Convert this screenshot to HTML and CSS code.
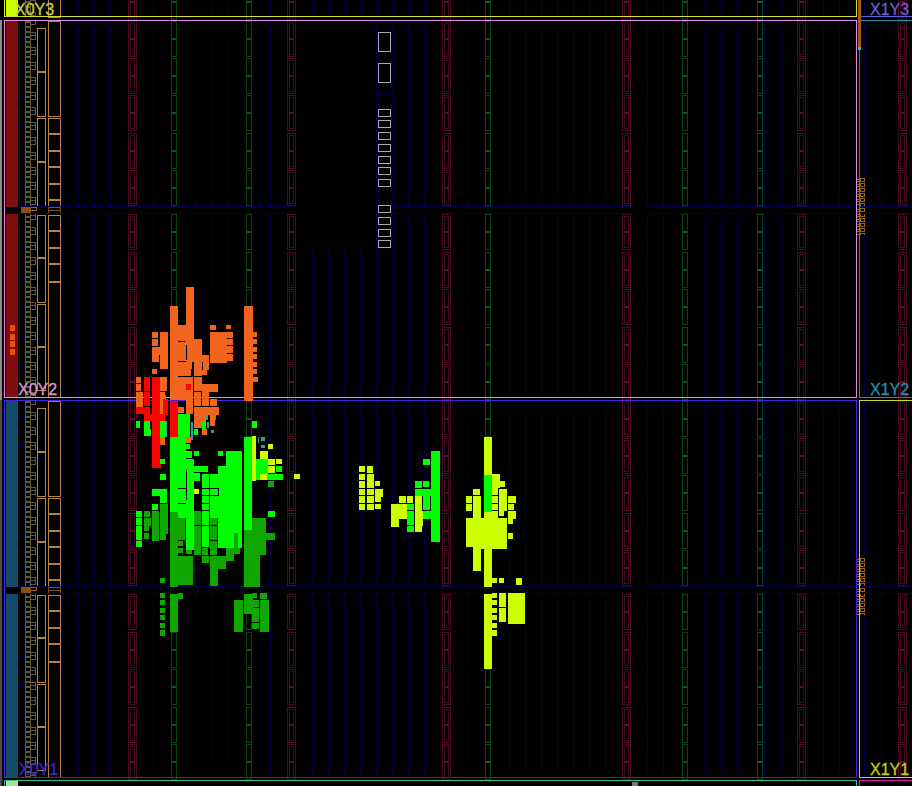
FILE: index.html
```html
<!DOCTYPE html>
<html lang="en">
<head>
<meta charset="utf-8">
<title>Device view</title>
<link rel="stylesheet" href="styles.css">
</head>
<body>
<svg class="device" width="912" height="786" viewBox="0 0 912 786" xmlns="http://www.w3.org/2000/svg" xmlns:xlink="http://www.w3.org/1999/xlink">
<defs>
  <pattern id="iopat" x="25" y="17" width="12" height="15" patternUnits="userSpaceOnUse">
    <path class="io" d="M.5 .5h5v4h-5zM.5 5.5h5v4h-5zM.5 10.5h5v4h-5zM5.5 0.5h5v3h-5zM5.5 3.5h5v4h-5z"/>
  </pattern>
  <pattern id="rpat" x="857" y="178" width="8" height="5" patternUnits="userSpaceOnUse">
    <path class="rio" d="M3.5 .5h4v3h-4zM0 1.5h3.5M0 3.5h3.5"/>
  </pattern>
  <g id="br">
    <rect class="br-o" x=".5" y=".5" width="8" height="35"/>
    <rect class="br-i" x="2.5" y="2.5" width="4" height="31"/>
    <path class="br-m" d="M2 17.5h5"/>
  </g>
  <g id="gr">
    <rect class="gr-o" x=".5" y=".5" width="5" height="35"/>
    <path class="gr-m" d="M1 17.5h4"/>
  </g>
  <g id="brcol">
    <use href="#br" y="21"/><use href="#br" y="58"/><use href="#br" y="95"/><use href="#br" y="133"/><use href="#br" y="170"/>
    <use href="#br" y="214"/><use href="#br" y="252"/><use href="#br" y="289"/><use href="#br" y="327"/><use href="#br" y="364"/>
  </g>
  <g id="grcol">
    <use href="#gr" y="21"/><use href="#gr" y="58"/><use href="#gr" y="95"/><use href="#gr" y="133"/><use href="#gr" y="170"/>
    <use href="#gr" y="214"/><use href="#gr" y="252"/><use href="#gr" y="289"/><use href="#gr" y="327"/><use href="#gr" y="364"/>
  </g>
  <g id="col2">
    <path class="ob" d="M37.500 28.500h8v88h-8zM37.500 118.500h8v88h-8zM37.500 215.500h8v87h-8zM37.500 304.500h8v86h-8z"/>
    <path class="ob2" d="M37.500 72h8M37.500 162h8M37.500 258h8M37.500 347h8"/>
  </g>
  <g id="tile">
    <path class="grid" d="M19.500 21V206M62.500 21V206M78.500 21V206M94.500 21V206M110.500 21V206M153.500 21V206M179.500 21V206M195.500 21V206M211.500 21V206M227.500 21V206M259.500 21V206M270.500 21V206M312.500 21V206M328.500 21V206M344.500 21V206M360.500 21V206M376.500 21V206M392.500 21V206M408.500 21V206M424.500 21V206M467.500 21V206M509.500 21V206M525.500 21V206M541.500 21V206M557.500 21V206M573.500 21V206M589.500 21V206M605.500 21V206M647.500 21V206M663.500 21V206M706.500 21V206M722.500 21V206M738.500 21V206M764.500 21V206M780.500 21V206M807.500 21V206M823.500 21V206M839.500 21V206M864.500 21V206M881.500 21V206"/>
    <path class="grid" d="M19.500 214V397M62.500 214V397M78.500 214V397M94.500 214V397M110.500 214V397M153.500 214V397M179.500 214V397M195.500 214V397M211.500 214V397M227.500 214V397M259.500 214V397M270.500 214V397M312.500 214V397M328.500 214V397M344.500 214V397M360.500 214V397M376.500 214V397M392.500 214V397M408.500 214V397M424.500 214V397M467.500 214V397M509.500 214V397M525.500 214V397M541.500 214V397M557.500 214V397M573.500 214V397M589.500 214V397M605.500 214V397M647.500 214V397M663.500 214V397M706.500 214V397M722.500 214V397M738.500 214V397M764.500 214V397M780.500 214V397M807.500 214V397M823.500 214V397M839.500 214V397M864.500 214V397M881.500 214V397"/>
    <path class="grid" d="M18 36.500h7M18 51.500h7M18 66.500h7M18 81.500h7M18 96.500h7M18 111.500h7M18 126.500h7M18 141.500h7M18 156.500h7M18 171.500h7M18 186.500h7M18 201.500h7M18 231.500h7M18 246.500h7M18 261.500h7M18 276.500h7M18 291.500h7M18 306.500h7M18 321.500h7M18 336.500h7M18 351.500h7M18 366.500h7M18 381.500h7"/>
    <rect x="25" y="21" width="12" height="185" fill="url(#iopat)"/>
    <rect x="25" y="214" width="12" height="183" fill="url(#iopat)"/>
    <path class="ob" d="M48.500 21.500h12v95h-12zM48.500 118.500h12v88h-12zM48.500 215.500h12v66h-12zM48.500 282.500h12v115h-12z"/>
    <path class="ob2" d="M48.500 134h12M48.500 151h12M48.500 167h12M48.500 184h12M48.500 200h12M48.500 231h12M48.500 248h12M48.500 264h12"/>
    <path class="ob-d" d="M48.500 207.500h12v6h-12zM48.500 210.500h12"/>
    <rect class="brown" x="21" y="207" width="10" height="7"/>
    <path class="rio" d="M31 207.500h5v3h-5"/>
    <rect x="857" y="178" width="8" height="57" fill="url(#rpat)"/>
    <use href="#brcol" x="128"/><use href="#brcol" x="287"/><use href="#brcol" x="442"/><use href="#brcol" x="622"/><use href="#brcol" x="797"/><use href="#brcol" x="898"/>
    <use href="#grcol" x="171"/><use href="#grcol" x="246"/><use href="#grcol" x="485"/><use href="#grcol" x="682"/><use href="#grcol" x="757"/>
  </g>
</defs>

<rect class="side-y" x="6" y="0" width="12" height="16"/>
<rect class="side-r" x="6" y="21" width="12" height="186"/>
<rect class="side-r" x="6" y="214" width="12" height="183"/>
<rect class="side-b" x="6" y="401" width="12" height="186"/>
<rect class="side-b" x="6" y="594" width="12" height="184"/>
<rect class="side-g" x="6" y="781" width="12" height="5"/>
<rect class="edge" x="0" y="20" width="2" height="380"/>
<rect class="edge-d" x="0" y="400" width="2" height="386"/>
<path class="small-o" d="M10 325h5v6h-5zM10 334h5v6h-5zM10 341h5v6h-5zM10 349h5v6h-5z"/>

<use href="#tile" y="-380"/>
<use href="#tile"/>
<use href="#tile" y="380"/>
<use href="#col2"/>
<use href="#col2" y="380"/>

<rect class="blank" x="296" y="21" width="80" height="230"/>
<path class="band" d="M18 206.500H295M392 206.500H631M647 206.500H912M18 213.500H295M392 213.500H631M647 213.500H912"/>
<path class="band" d="M18 586.500H631M647 586.500H912M18 593.500H631M647 593.500H912"/>
<path class="band" d="M376.500 21V251M392.500 21V251M377 94.500h15M377 251.500h15"/>

<path class="ln-yellow" d="M4.500 0V16.500H856.500V0"/>
<path class="ln-pink" d="M4.500 20.500H856.500V397.500H4.500Z"/>
<path class="ln-purple" d="M4.500 400.500H856.500V777.500H4.500Z"/>
<path class="ln-mint" d="M4.500 786V780.500H856.500V786"/>
<path class="ln-violet" d="M912 16.500H860"/>
<path class="ln-teal" d="M912 20.500H859.500V397.500H912"/>
<path class="ln-lime" d="M912 400.500H859.500V777.500H912"/>
<path class="ln-magenta" d="M912 780.500H859.500V786"/>
<rect class="brown2" x="857.500" y="0" width="3" height="47"/>
<rect class="cyan" x="858" y="47" width="3" height="3"/>
<rect class="grey-dot" x="632" y="782" width="6" height="4"/>

<path class="pad" d="M378.500 32.500h12v19h-12zM378.500 63.500h12v19h-12zM378.500 109.500h12v7h-12zM378.500 120.500h12v7h-12zM378.500 132.500h12v7h-12zM378.500 144.500h12v7h-12zM378.500 156.500h12v7h-12zM378.500 167.500h12v7h-12zM378.500 179.500h12v7h-12zM378.500 205.500h12v7h-12zM378.500 217.500h12v7h-12zM378.500 229.500h12v7h-12zM378.500 240.500h12v7h-12z"/>

<!-- placed cells -->
<path class="c-o" d="M186 287H194V325H186zM170 306H178V400H170zM178 325H194V340H178zM152 332H158V338H152zM152 339H158V346H152zM152 347H168V355H152zM152 355H159V362H152zM160 332H168V369H160zM152 369H157V374H152zM136 377H141V383H136zM136 384H141V391H136zM136 392H143V407H136zM160 377H167V391H160zM160 392H165V445H160zM178 340H186V369H178zM186 339H202V362H186zM186 362H192V369H186zM178 369H191V376H178zM178 377H193V384H178zM178 384H186V400H178zM186 384H193V414H186zM178 407H184V413H178zM194 362H202V376H194zM194 377H202V391H194zM194 392H201V406H194zM194 407H219V415H194zM194 415H206V428H194zM202 355H209V370H202zM202 370H207V375H202zM202 384H218V392H202zM202 392H209V406H202zM210 399H217V406H210zM210 415H215V426H210zM202 429H207V435H202zM186 437H191V443H186zM210 332H233V361H210zM210 361H227V363H210zM210 325H216V330H210zM226 325H231V329H226zM244 306H253V401H244zM253 332H257V337H253zM253 339H257V344H253zM253 347H257V352H253zM253 354H257V359H253zM253 362H257V367H253zM253 369H257V374H253zM253 377H258V382H253z"/>
<path class="c-notch" d="M227 338H233V339H227zM227 345H233V346H227zM227 353H233V354H227zM178 341H185V342H178zM178 361H186V362H178zM186 345H187V360H186zM202 362H203V370H202zM209 362H210V375H209z"/>
<path class="c-r" d="M136 407H150V414H136zM144 377H150V391H144zM144 392H150V406H144zM152 377H160V459H152zM152 459H161V468H152zM144 414H165V421H144zM163 399H168V415H163zM170 401H178V437H170zM186 384H191V390H186z"/>
<path class="c-t" d="M165 395H166V400H165zM166 421H167V437H166zM191 422H193V440H191zM206 415H208V420H206zM215 415H216V420H215zM207 422H209V428H207zM211 430H214V433H211zM261 437H265V441H261zM261 445H265V448H261zM258 437H259V443H258z"/>
<path class="c-d" d="M144 511H150V517H144zM144 518H151V526H144zM144 526H149V531H144zM144 533H149V539H144zM152 511H159V541H152zM160 504H168V534H160zM160 534H166V540H160zM170 512H178V587H170zM178 518H185V540H178zM178 541H183V546H178zM178 548H183V553H178zM178 556H193V585H178zM186 548H192V554H186zM194 511H201V525H194zM194 526H201V555H194zM202 556H209V563H202zM202 548H208V555H202zM210 518H217V525H210zM210 526H217V555H210zM210 556H218V586H210zM218 556H226V569H218zM226 548H234V561H226zM234 533H240V554H234zM244 530H260V587H244zM252 518H266V555H252zM266 533H275V540H266zM268 481H274V487H268zM160 578H165V583H160zM160 593H165V598H160zM160 600H165V605H160zM160 608H165V613H160zM160 615H165V620H160zM160 623H165V628H160zM160 630H165V636H160zM170 594H178V632H170zM178 593H183V599H178zM234 600H243V632H234zM244 594H253V614H244zM252 593H257V598H252zM252 600H259V607H252zM252 608H259V622H252zM252 623H259V629H252zM260 593H267V599H260zM260 600H269V632H260z"/>
<path class="c-g" d="M136 421H140V428H136zM144 421H150V429H144zM144 429H151V436H144zM160 421H166V437H160zM178 414H190V437H178zM170 437H178V512H170zM178 437H186V518H178zM186 444H190V449H186zM186 451H192V458H186zM186 459H194V550H186zM194 466H202V472H194zM194 473H200V481H194zM194 451H199V456H194zM202 421H206V429H202zM194 429H198V435H194zM202 466H208V472H202zM202 474H209V547H202zM210 474H218V518H210zM218 451H223V456H218zM218 466H226V474H218zM218 474H234V548H218zM234 474H242V533H234zM238 533H242V548H238zM226 451H242V474H226zM244 437H252V530H244zM252 421H257V428H252zM256 459H268V480H256zM268 474H283V480H268zM276 466H282V472H276zM160 459H165V464H160zM160 474H166V480H160zM152 489H167V496H152zM160 496H167V503H160zM152 504H158V510H152zM136 511H142V517H136zM136 518H142V525H136zM136 526H142V540H136zM136 541H142V547H136zM268 511H275V517H268zM407 504H414V510H407zM407 511H414V525H407zM407 526H414V532H407zM415 481H422V488H415zM423 481H429V487H423zM415 489H431V496H415zM423 496H430V510H423zM423 511H431V519H423zM423 459H430V465H423zM431 451H440V542H431zM484 475H492V512H484z"/>
<path class="c-notch" d="M178 488H186V489H178zM178 503H186V504H178zM202 488H218V489H202zM202 495H218V496H202zM202 503H210V504H202zM202 510H210V511H202zM218 488H219V496H218zM202 525H218V526H202zM210 540H218V541H210zM178 555H226V556H178zM186 470H187V500H186z"/>
<path class="c-y" d="M252 436H256V481H252zM260 451H268V459H260zM268 459H275V465H268zM276 459H282V464H276zM268 466H275V473H268zM260 474H267V480H260zM268 444H273V449H268zM294 474H300V479H294zM194 489H199V494H194zM359 466H365V472H359zM367 466H373V473H367zM359 474H365V480H359zM367 474H374V488H367zM359 481H365V488H359zM375 481H380V486H375zM359 489H365V495H359zM367 489H374V495H367zM375 489H383V497H375zM375 497H381V502H375zM359 496H365V503H359zM367 496H374V503H367zM359 504H365V510H359zM367 504H374V510H367zM375 504H381V509H375zM399 496H406V503H399zM391 504H407V519H391zM391 519H399V527H391zM407 496H413V503H407zM415 496H422V511H415zM415 511H423V526H415zM415 526H422V532H415zM484 437H492V475H484zM484 512H492V587H484zM484 594H492V669H484zM492 474H500V488H492zM500 481H505V487H500zM492 488H498V495H492zM473 489H480V495H473zM466 496H472V503H466zM473 496H481V571H473zM466 504H472V511H466zM466 518H473V547H466zM481 518H484V549H481zM492 496H498V503H492zM492 504H498V510H492zM499 489H507V511H499zM499 511H504V516H499zM508 496H516V503H508zM508 504H514V510H508zM508 511H516V519H508zM508 519H513V524H508zM508 533H513V539H508zM492 518H507V549H492zM492 511H498V518H492zM492 578H497V583H492zM499 578H504V583H499zM516 578H522V585H516zM492 593H497V598H492zM492 600H497V605H492zM492 608H497V613H492zM492 615H497V620H492zM492 623H497V628H492zM492 630H497V636H492zM499 593H506V607H499zM499 608H506V622H499zM508 593H525V624H508z"/>

<text class="lbl t-yellow" x="15" y="15">X0Y3</text>
<text class="lbl t-violet" x="870" y="15">X1Y3</text>
<text class="lbl t-pink" x="18" y="395">X0Y2</text>
<text class="lbl t-teal" x="870" y="395">X1Y2</text>
<text class="lbl t-purple" x="19" y="775">X0Y1</text>
<text class="lbl t-lime" x="870" y="775">X1Y1</text>
</svg>
</body>
</html>
```
FILE: styles.css
```css
html, body { margin: 0; padding: 0; background: #000; overflow: hidden; }
.device { display: block; background: #000; shape-rendering: crispEdges; }

.grid { fill: none; stroke: #000046; stroke-width: 1; }
.band { fill: none; stroke: #00004e; stroke-width: 1; }
.blank { fill: #000; }
.io { fill: none; stroke: #5e5a3e; stroke-width: 1; }
.rio { fill: none; stroke: #9a6414; stroke-width: 1; }
.ob { fill: none; stroke: #b5843c; stroke-width: 1; }
.ob2 { fill: none; stroke: #b5843c; stroke-width: 2; }
.ob-d { fill: none; stroke: #7a4e18; stroke-width: 1; }
.brown { fill: #8a5210; }
.br-o { fill: none; stroke: #4a0a22; stroke-width: 1; }
.br-i { fill: none; stroke: #3d0a1e; stroke-width: 1; }
.br-m { fill: none; stroke: #5c0f2c; stroke-width: 2; }
.gr-o { fill: none; stroke: #0a4410; stroke-width: 1; }
.gr-m { fill: none; stroke: #0a5a10; stroke-width: 2; }

.side-y { fill: #ccff00; }
.side-r { fill: #7f0f0f; }
.side-b { fill: #124c66; }
.side-g { fill: #a4e890; }
.edge { fill: #8e8e8e; }
.edge-d { fill: #4c4c4c; }
.small-o { fill: #e8500f; }

.ln-yellow, .ln-pink, .ln-purple, .ln-mint, .ln-violet, .ln-teal, .ln-lime, .ln-magenta { fill: none; stroke-width: 1; }
.ln-yellow { stroke: #dcdc3c; }
.ln-pink { stroke: #e08ee0; }
.ln-purple { stroke: #4a20e0; }
.ln-mint { stroke: #30c090; }
.ln-violet { stroke: #6a5fd8; }
.ln-teal { stroke: #1f8fa8; }
.ln-lime { stroke: #c8d820; }
.ln-magenta { stroke: #e010b0; }
.brown2 { fill: #a05a1e; }
.cyan { fill: #20c8c8; }
.grey-dot { fill: #7a7a7a; }
.pad { fill: none; stroke: #aaaaaa; stroke-width: 1; }

.c-o { fill: #f0641e; }
.c-r { fill: #ff0000; }
.c-t { fill: #2aa0a0; }
.c-d { fill: #10a800; }
.c-g { fill: #00ff00; }
.c-notch { fill: #000; }
.c-y { fill: #ccff00; }

.lbl { font-family: "Liberation Sans", Arial, sans-serif; font-size: 16px; stroke-width: .3px; }
.t-yellow { fill: #cfcf3a; stroke: #cfcf3a; }
.t-violet { fill: #6a5fd8; stroke: #6a5fd8; }
.t-pink { fill: #d896d8; stroke: #d896d8; }
.t-teal { fill: #2090b0; stroke: #2090b0; }
.t-purple { fill: #4422cc; stroke: #4422cc; }
.t-lime { fill: #c4d400; stroke: #c4d400; }
```
